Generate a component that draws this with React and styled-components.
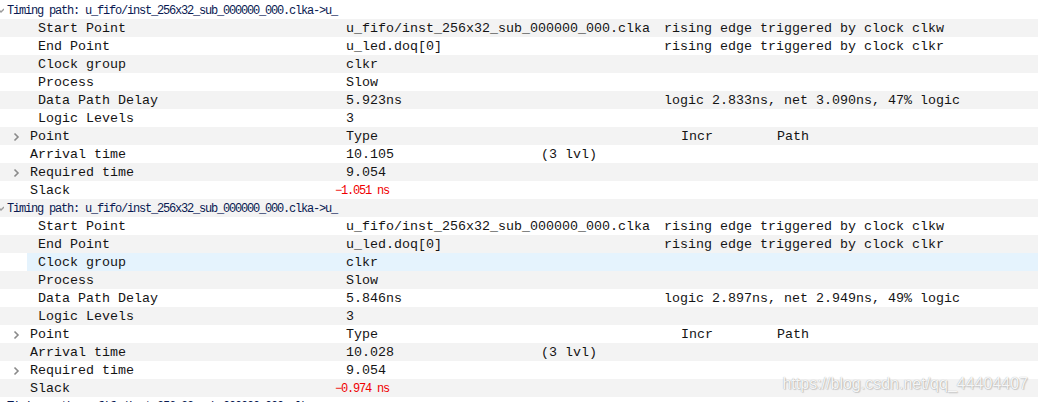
import React from 'react';
import styled, { createGlobalStyle } from 'styled-components';

// --- estilos ---
const GlobalStyle = createGlobalStyle`
  html, body {
    margin: 0;
    padding: 0;
    background: #fff;
    overflow: hidden;
  }
  body {
    font-family: "Liberation Mono", "Courier New", monospace;
  }
`;

const Panel = styled.div`
  position: relative;
  width: 1038px;
  height: 402px;
  padding-top: 1px;
  box-sizing: border-box;
  overflow: hidden;
  background: #fff;
`;

const Row = styled.div`
  display: grid;
  grid-template-columns: 346px 195px 123px 1fr;
  box-sizing: border-box;
  height: 18px;
  padding-top: 2px;
  align-items: center;
  font-size: 13.33px;
  line-height: 16px;
  color: #141414;
  white-space: nowrap;
  background: ${({ $striped, $highlight }) =>
    $highlight
      ? 'linear-gradient(to right, #fff 27px, #e5f3fd 27px)'
      : $striped
      ? '#f3f3f3'
      : '#fff'};
`;

const HeaderRow = styled.div`
  display: flex;
  align-items: center;
  box-sizing: border-box;
  height: 18px;
  padding-top: 2px;
  background: ${({ $striped }) => ($striped ? '#f3f3f3' : '#fff')};
  white-space: nowrap;
`;

const HeaderToggle = styled.svg`
  width: 4px;
  height: 16px;
  flex: none;
`;

const HeaderText = styled.span`
  margin-left: 3px;
  font-family: "Liberation Mono", "Courier New", monospace;
  font-size: 12px;
  letter-spacing: -1.2px;
  color: #0a1a52;
`;

const LabelCell = styled.div`
  display: flex;
  align-items: center;
  padding-left: ${({ $indent }) => $indent}px;
`;

const Chevron = styled.svg`
  width: 18px;
  height: 16px;
  flex: none;
`;

const Cell = styled.div``;

const SlackValue = styled.div`
  margin-left: -11px;
  font-size: 12px;
  letter-spacing: -1.2px;
  color: #f00000;
`;

const ColumnHeads = styled.div`
  display: flex;
  padding-left: 17px;
  gap: 64px;
`;

const Watermark = styled.div`
  position: absolute;
  right: 10px;
  bottom: 9px;
  font-family: "Liberation Sans", Arial, sans-serif;
  font-size: 16px;
  color: rgba(255, 255, 255, 0.92);
  text-shadow: 0 0 1px rgba(0, 0, 0, 0.35), 1px 1px 1px rgba(0, 0, 0, 0.15);
`;
// --- fim dos estilos ---

const HEADER = 'Timing path: u_fifo/inst_256x32_sub_000000_000.clka->u_';

const paths = [
  {
    delay: '5.923ns',
    delayInfo: 'logic 2.833ns, net 3.090ns, 47% logic',
    arrival: '10.105',
    slack: '\u22121.051 ns',
    highlight: null,
  },
  {
    delay: '5.846ns',
    delayInfo: 'logic 2.897ns, net 2.949ns, 49% logic',
    arrival: '10.028',
    slack: '\u22120.974 ns',
    highlight: 'Clock group',
  },
];

const ChevronIcon = () => (
  <Chevron viewBox="0 0 18 16">
    <polyline points="2.5,4.5 6,8 2.5,11.5" fill="none" stroke="#8a8a8a" strokeWidth="1.6" />
  </Chevron>
);

// monta a lista de linhas (cabeçalho + propriedades + tabela de atrasos)
const buildRows = () => {
  const rows = [];
  paths.forEach((p) => {
    const hl = (label) => p.highlight === label;
    rows.push({ kind: 'header' });
    rows.push({ label: 'Start Point', value: 'u_fifo/inst_256x32_sub_000000_000.clka', info: 'rising edge triggered by clock clkw', highlight: hl('Start Point') });
    rows.push({ label: 'End Point', value: 'u_led.doq[0]', info: 'rising edge triggered by clock clkr', highlight: hl('End Point') });
    rows.push({ label: 'Clock group', value: 'clkr', highlight: hl('Clock group') });
    rows.push({ label: 'Process', value: 'Slow', highlight: hl('Process') });
    rows.push({ label: 'Data Path Delay', value: p.delay, info: p.delayInfo });
    rows.push({ label: 'Logic Levels', value: '3' });
    rows.push({ kind: 'table', label: 'Point', value: 'Type', chevron: true, heads: true });
    rows.push({ kind: 'table', label: 'Arrival time', value: p.arrival, extra: '(3 lvl)' });
    rows.push({ kind: 'table', label: 'Required time', value: '9.054', chevron: true });
    rows.push({ kind: 'table', label: 'Slack', slack: p.slack });
  });
  rows.push({ kind: 'header' });
  return rows;
};

const App = () => {
  const rows = buildRows();

  return (
    <>
      <GlobalStyle />
      <Panel>
        {rows.map((r, i) => {
          const striped = i % 2 === 1;
          if (r.kind === 'header') {
            return (
              <HeaderRow key={i} $striped={striped}>
                <HeaderToggle viewBox="0 0 4 16">
                  <polyline points="-2,6 1,9 4,6" fill="none" stroke="#9a9a9a" strokeWidth="1.4" />
                </HeaderToggle>
                <HeaderText>{HEADER}</HeaderText>
              </HeaderRow>
            );
          }
          const isTable = r.kind === 'table';
          return (
            <Row key={i} $striped={striped} $highlight={r.highlight}>
              <LabelCell $indent={isTable ? (r.chevron ? 12 : 30) : 38}>
                {r.chevron && <ChevronIcon />}
                {r.label}
              </LabelCell>
              {r.slack ? <SlackValue>{r.slack}</SlackValue> : <Cell>{r.value}</Cell>}
              <Cell>{r.extra}</Cell>
              {r.heads ? (
                <ColumnHeads>
                  <span>Incr</span>
                  <span>Path</span>
                </ColumnHeads>
              ) : (
                <Cell>{r.info}</Cell>
              )}
            </Row>
          );
        })}
        <Watermark>https://blog.csdn.net/qq_44404407</Watermark>
      </Panel>
    </>
  );
};

export default App;
